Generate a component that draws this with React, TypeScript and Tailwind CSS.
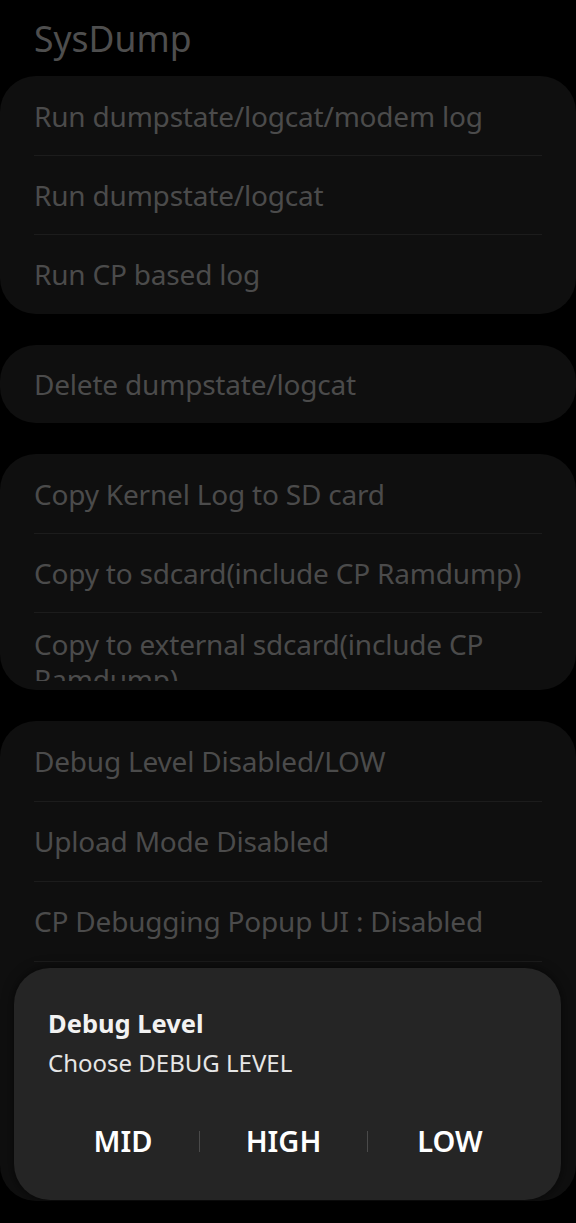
import React from "react";

const Divider = () => <div className="mx-[34px] h-px bg-[#1c1c1c]" />;

const Row = ({ text, tall }: { text: string; tall?: boolean }) => (
  <div
    className={`flex ${tall ? "h-[79px]" : "h-[78px]"} items-center px-[34px] text-[28px] leading-[35px] tracking-[-0.2px] text-[#4b4b4b]`}
  >
    {text}
  </div>
);

export default function App() {
  return (
    <div
      className="relative h-[1223px] w-[576px] overflow-hidden bg-black"
      style={{ fontFamily: '"Noto Sans", Roboto, sans-serif' }}
    >
      <div className="flex h-[76px] items-start px-[34px] pt-[14px] text-[35.5px] leading-[48px] text-[#4e4e4e]">
        SysDump
      </div>

      <div className="flex flex-col gap-[31px]">
        <div className="rounded-[36px] bg-[#0f0f0f] py-px">
          <Row text="Run dumpstate/logcat/modem log" />
          <Divider />
          <Row text="Run dumpstate/logcat" />
          <Divider />
          <Row text="Run CP based log" />
        </div>

        <div className="rounded-[36px] bg-[#0f0f0f]">
          <Row text="Delete dumpstate/logcat" />
        </div>

        <div className="rounded-[36px] bg-[#0f0f0f] pt-px pb-[9px]">
          <Row text="Copy Kernel Log to SD card" />
          <Divider />
          <Row text="Copy to sdcard(include CP Ramdump)" />
          <Divider />
          <div className="h-[68px] overflow-hidden px-[34px] pt-[14px] pr-[60px] text-[28px] leading-[35px] tracking-[-0.2px] text-[#4b4b4b]">
            Copy to external sdcard(include CP Ramdump)
          </div>
        </div>

        <div className="h-[480px] rounded-[36px] bg-[#0f0f0f] pt-px">
          <Row tall text="Debug Level Disabled/LOW" />
          <Divider />
          <Row tall text="Upload Mode Disabled" />
          <Divider />
          <Row tall text="CP Debugging Popup UI : Disabled" />
          <Divider />
        </div>
      </div>

      <div className="absolute left-[14px] top-[968px] h-[232px] w-[547px] rounded-[36px] bg-[#252525] shadow-[0_0_12px_rgba(0,0,0,0.6)]">
        <div className="px-[34px] pt-[38px]">
          <div className="text-[25.5px] font-bold leading-[34px] text-[#f2f2f2]">Debug Level</div>
          <div className="mt-[7px] text-[24px] leading-[32px] text-[#e6e6e6]">Choose DEBUG LEVEL</div>
        </div>
        <div className="mt-[42px] flex items-center pl-[33px]">
          <div className="flex w-[152px] justify-center text-[29px] font-semibold leading-[40px] text-white">MID</div>
          <div className="h-[21px] w-px bg-[#4a4a4a]" />
          <div className="flex w-[167px] justify-center text-[29px] font-semibold leading-[40px] text-white">HIGH</div>
          <div className="h-[21px] w-px bg-[#4a4a4a]" />
          <div className="flex w-[164px] justify-center text-[29px] font-semibold leading-[40px] text-white">LOW</div>
        </div>
      </div>
    </div>
  );
}
